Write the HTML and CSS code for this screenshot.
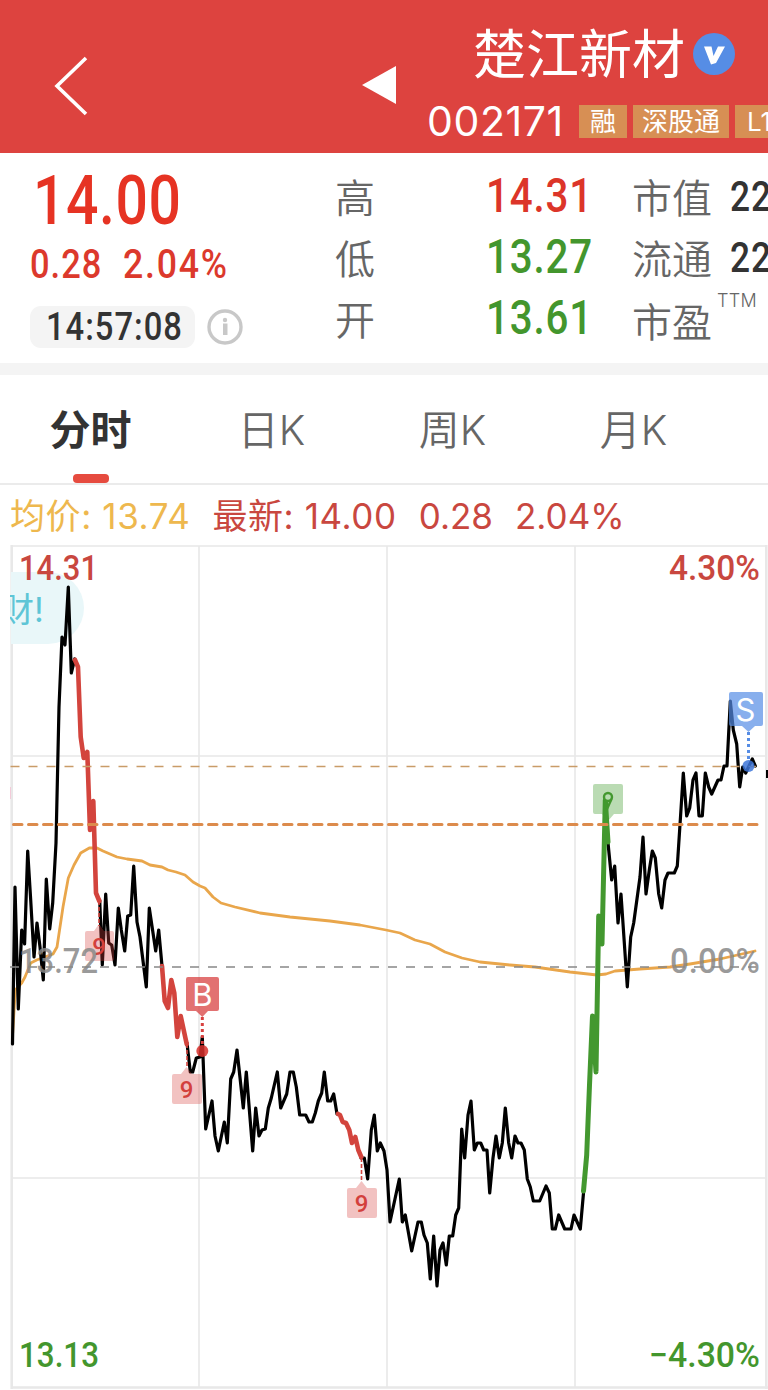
FILE: index.html
```html
<!DOCTYPE html>
<html lang="zh-CN">
<head>
    <meta charset="UTF-8">
    <meta name="viewport" content="width=device-width, initial-scale=1.0">
    <title>楚江新材 002171</title>
    <link rel="stylesheet" href="styles.css">
</head>
<body>
    <header class="top-bar">
        <svg class="back" width="36" height="64" viewBox="0 0 36 64"><path d="M33 4L4 32L33 60" fill="none" stroke="#fff" stroke-width="3.6"/></svg>
        <svg class="prev" width="35" height="38" viewBox="0 0 35 38"><path d="M0 19L34 0V38Z" fill="#fff"/></svg>
        <div class="stock">
            <div class="stock-name">
                <h1>楚江新材</h1>
                <svg width="42" height="42" viewBox="0 0 42 42"><circle cx="21" cy="21" r="21" fill="#568de5"/><path d="M11 13.5H18.500L20.5 23L25 13.5H32L23 30L18 31.5Z" fill="#fff"/></svg>
            </div>
            <div class="stock-code">
                <span class="code">002171</span>
                <span class="tag">融</span>
                <span class="tag">深股通</span>
                <span class="tag">L1</span>
            </div>
        </div>
    </header>

    <section class="quote">
        <div class="price-box">
            <div class="price"><span class="num">14.00</span></div>
            <div class="change"><span class="num">0.28</span><span class="num rate">2.04%</span></div>
            <div class="time-row">
                <div class="time"><span class="num">14:57:08</span></div>
                <svg width="36" height="36" viewBox="0 0 36 36"><circle cx="18" cy="18" r="16" fill="none" stroke="#c8c8c8" stroke-width="3.4"/><circle cx="18" cy="11" r="2.2" fill="#c8c8c8"/><path d="M16 14.500H20.500V26H16Z" fill="#c8c8c8"/></svg>
            </div>
        </div>
        <div class="labels"><span>高</span><span>低</span><span>开</span></div>
        <div class="values">
            <span class="num up">14.31</span>
            <span class="num down">13.27</span>
            <span class="num down">13.61</span>
        </div>
        <div class="labels"><span>市值</span><span>流通</span><span class="pe">市盈<sup>TTM</sup></span></div>
        <div class="caps"><span class="num">22</span><span class="num">22</span></div>
    </section>

    <nav class="tabs">
        <a class="tab active">分时</a>
        <a class="tab">日K</a>
        <a class="tab">周K</a>
        <a class="tab">月K</a>
    </nav>

    <div class="legend">
        <span class="avg">均价: 13.74</span>
        <span>最新: 14.00</span>
        <span class="diff">0.28</span>
        <span class="diff">2.04%</span>
    </div>

    <svg class="chart" width="768" height="845" viewBox="0 545 768 845">
        <!-- grid -->
        <path class="grid" d="M11 546H767M11 756H767M11 1178H767M199 546V1387M387 546V1387M575 546V1387"/>
        <path class="frame" d="M11.7 545V1389M766.3 545V1389M11 1387.5H768"/>

        <!-- danmaku bubble -->
        <path d="M11 572H48A36 36 0 0 1 48 644H11Z" fill="#e9f7f9"/>
        <svg x="10" y="580" width="60" height="60" viewBox="10 580 60 60"><text class="bubble" x="0" y="622">财!</text></svg>
        <path d="M10.500 787V799" stroke="#f3cbd9" stroke-width="1"/>

        <path class="avg-line" d="M12.700 1033L15.300 990L21.700 983L25 977L30.700 963L36.700 960L53 954L57 947L60 927L63 907L68.300 878L74 865L80.700 853L89.300 848L97 848L103 851L117 857L127 859L142 861L150 865L162 867L168 870L176 872L185 875L193 882L200 886L205 888L213 897L221 903L235 907L260 913L290 917L330 921L360 925L386 930L400 933L415 940L430 944L445 952L462 958L480 962L510 965L535 967L570 972L597 975L606 974L615 971L640 969L670 967L690 964L720 959L755 951"/>

        <path class="price-line" d="M12.500 1044L15 887L18.300 1009L21.700 930L24.600 944L27.700 851L30.700 900L34 957L37 923L40 947L43.300 980L46.300 879L49.700 929L52.700 903L56 843L59 707L62 637L65 645L68.300 587L71.300 673L74.700 659"/>
        <path class="price-line" d="M99.700 900L102.300 965L105.700 894L108.700 943L111.700 945L115 965L118.300 908L121.300 930L124.700 951L127.700 916L130.700 915L133.700 866L137 922L140 937L146.300 987L149.300 908L155.700 951L158.700 930L162 966"/>
        <path class="price-line" d="M187 1043L190.300 1072L192.700 1072L196.300 1058L200 1057L202.300 1037L205.700 1129L212 1101L215 1136L218.300 1151L224.300 1122L227.300 1143L230.700 1079L233.700 1072L237 1050L243.300 1108L246.300 1072L252.700 1151L255.700 1108L259 1136L262 1130L265.300 1129L268.300 1108L271.300 1098L277.300 1072L280.700 1108L286.700 1094L290 1072L293.300 1072L296.300 1087L299.700 1115L305.700 1115L309 1122L312.300 1122L315.300 1113L318.300 1101L321.700 1093L324.300 1072L327.700 1101L330.700 1101L333.700 1094L337 1114"/>
        <path class="price-line" d="M361 1158L364.300 1158L367.700 1179L371.300 1130L374.300 1115L377.300 1151L380.300 1143L384 1151L387 1170L390 1222L399.300 1179L402.300 1222L405.300 1215L411.700 1251L418 1222L421.300 1222L424 1235L427.300 1243L430.300 1279L433.700 1236L437 1286L440 1250L443 1243L446.300 1265L449.300 1236L452.700 1236L455.700 1215L458.700 1208L461.700 1129L464.700 1158L468 1115L471 1101L474.300 1150L477.300 1143L480.700 1143L483.700 1150L487 1150L489.700 1193L493 1158L496 1136L499.300 1158L502.300 1143L505.300 1108L508.700 1143L511.700 1158L515 1136L518 1143L521 1143L524.300 1150L527.300 1179L530.300 1187L533.300 1201L539.700 1201L546 1186L549.300 1193L552.300 1229L555.300 1229L558.700 1215L564.700 1229L571 1229L574 1215L580.300 1229L583.500 1193"/>
        <path class="price-line" d="M608 843L611.700 880L614.700 866L618 923L621 894L627.300 987L630.700 937L633.700 923L640 877L643 837L646 894L649.300 870L652.300 851L655.300 858L658.700 894L661.700 908L665 880L668 873L674.300 873L677.300 866L680.300 820L683.300 773L686.700 816L689.700 808L693 780L696 773L699 816L702.300 816L705.300 773L708.700 787L711.700 794L718 780L721 780L724 766L727 766L730.300 701L733.300 730L736.700 744L739.700 787L742.700 767L745.700 773L752.300 759L755.300 766"/>

        <!-- nine-turn runs -->
        <path class="run" d="M75 660L78 667L80.700 737L83.700 758L87.300 752L90 830L93.300 801L96 893L99.300 901"/>
        <path class="run" d="M162 966L164.700 1001L168 1008L171.300 980L174.300 993L177.300 1037L180.700 1016L186.700 1044"/>
        <path class="run" d="M338 1114L340 1115L342.700 1122L346 1123L349.300 1130L352 1143L355.300 1137L358.300 1150L361.300 1157"/>
        <path class="run run-up" d="M583.500 1191L586.700 1155L589.500 1085L592.500 1016L596 1072L598.700 916L602 944L605.300 800L608 842"/>

        <path class="dash-last" d="M10.500 766.500H756"/>
        <path class="dash-cost" d="M13.500 824.500H757"/>
        <path class="dash-zero" d="M10 967H756"/>

        <!-- markers -->
        <g class="mark-down">
            <path d="M99 901V926M187 1044V1067M361.500 1158V1181"/>
            <path class="flag" d="M87 931H94L99 924L104 931H112Q114 931 114 933V959Q114 961 112 961H87Q85 961 85 959V933Q85 931 87 931Z"/>
            <path class="flag" d="M174 1074H181L186.500 1067L192 1074H200Q202 1074 202 1076V1102Q202 1104 200 1104H174Q172 1104 172 1102V1076Q172 1074 174 1074Z"/>
            <path class="flag" d="M349 1188H356L361.500 1181L367 1188H375Q377 1188 377 1190V1216Q377 1218 375 1218H349Q347 1218 347 1216V1190Q347 1188 349 1188Z"/>
            <text x="99" y="955">9</text>
            <text x="186.500" y="1098">9</text>
            <text x="361.500" y="1212">9</text>
        </g>
        <path d="M595 784H621Q623 784 623 786V812Q623 814 621 814H614L608 821L602 814H595Q593 814 593 812V786Q593 784 595 784Z" fill="#419b2c" fill-opacity=".36"/>
        <circle cx="608" cy="797" r="4" fill="#b7dcb0" stroke="#43982f" stroke-width="2.400"/>
        <path d="M611.500 799L607 809" stroke="#43982f" stroke-width="2.400"/>

        <path d="M202.300 1017V1044" stroke="#d8403f" stroke-width="3" stroke-dasharray="3 3"/>
        <path d="M188 977H217Q219 977 219 979V1009Q219 1011 217 1011H208L202.300 1017L196 1011H188Q186 1011 186 1009V979Q186 977 188 977Z" fill="#d8403f" fill-opacity=".74"/>
        <circle cx="202.300" cy="1051" r="6" fill="#d8302c" fill-opacity=".85"/>
        <text class="mark-text" x="202.300" y="1005.500">B</text>

        <path d="M748.500 732V760" stroke="#568de5" stroke-width="3" stroke-dasharray="3 3"/>
        <path d="M731 692H761Q763 692 763 694V724Q763 726 761 726H755L748.500 732L742 726H731Q729 726 729 724V694Q729 692 731 692Z" fill="#568de5" fill-opacity=".7"/>
        <circle cx="748.500" cy="766" r="6" fill="#3d75d8" fill-opacity=".85"/>
        <text class="mark-text" x="745.500" y="720.500">S</text>
        <path d="M766 770H768V778H766Z"/>

        <!-- axis values -->
        <g class="axis">
            <text class="hi" x="19" y="580" textLength="79" lengthAdjust="spacingAndGlyphs">14.31</text>
            <text class="hi" x="669" y="580" textLength="91" lengthAdjust="spacingAndGlyphs">4.30%</text>
            <text class="mid" x="19" y="973" textLength="79" lengthAdjust="spacingAndGlyphs">13.72</text>
            <text class="mid" x="670" y="973" textLength="90" lengthAdjust="spacingAndGlyphs">0.00%</text>
            <text class="lo" x="19" y="1367" textLength="80" lengthAdjust="spacingAndGlyphs">13.13</text>
            <text class="lo" x="649" y="1367" textLength="111" lengthAdjust="spacingAndGlyphs">−4.30%</text>
        </g>
    </svg>
</body>
</html>
```
FILE: styles.css
```css
body {
    margin: 0;
    width: 768px;
    height: 1390px;
    overflow: hidden;
    background: #fff;
    color: #333;
    font-family: Inter, "Noto Sans CJK SC", sans-serif;
}
.top-bar {
    display: flex;
    height: 153px;
    overflow: hidden;
    background: #dd433f;
    color: #fff;
}
.back {
    margin: 54px 0 0 53px;
    flex: none;
}
.prev {
    margin: 66px 0 0 273px;
    flex: none;
}
.stock {
    margin-left: 30px;
    flex: none;
    width: 341px;
}
.stock-name {
    display: flex;
    align-items: center;
    height: 100px;
    padding: 8px 0 0 46px;
    box-sizing: border-box;
    gap: 8px;
}
.stock-name h1 {
    margin: 2px 0 0;
    font-size: 53px;
    line-height: 80px;
    font-weight: 400;
}
.stock-code {
    display: flex;
    align-items: center;
    height: 43px;
    gap: 6px;
}
.code {
    flex: none;
    width: 146px;
    font-size: 41px;
    line-height: 41px;
    letter-spacing: 0.6px;
    white-space: nowrap;
}
.tag {
    flex: none;
    min-width: 48px;
    height: 33px;
    padding: 0 9px;
    box-sizing: border-box;
    background: #d78f54;
    font-size: 26px;
    line-height: 33px;
    text-align: center;
    white-space: nowrap;
}
.num {
    display: inline-block;
    font-family: Roboto, sans-serif;
    font-weight: 500;
    letter-spacing: 0.03em;
    transform: scaleX(0.84);
    transform-origin: left;
}
.quote {
    display: grid;
    grid-template-columns: 305px 151px 146px 98px 38px;
    height: 210px;
    padding-left: 30px;
    box-sizing: border-box;
    overflow: hidden;
    white-space: nowrap;
}
.price {
    height: 80px;
    padding-top: 6px;
    box-sizing: border-box;
    color: #e63323;
    font-size: 68px;
    line-height: 80px;
}
.price .num {
    margin-left: 3px;
    letter-spacing: 0.01em;
}
.change {
    display: flex;
    height: 61px;
    color: #dc392c;
    font-size: 41px;
    line-height: 63px;
}
.change .num {
    width: 93px;
}
.change .rate {
    letter-spacing: 0.05em;
    transform: scaleX(0.87);
}
.time-row {
    display: flex;
    align-items: center;
    gap: 12px;
    height: 66px;
}
.time {
    width: 165px;
    height: 42px;
    padding-left: 16px;
    box-sizing: border-box;
    border-radius: 11px;
    background: #f4f4f4;
    font-size: 39px;
    line-height: 39px;
}
.labels, .values, .caps {
    display: flex;
    flex-direction: column;
    padding-top: 12px;
}
.labels span, .values span, .caps span {
    height: 61px;
    line-height: 61px;
}
.labels {
    padding-top: 15px;
    color: #666;
    font-size: 40px;
    font-weight: 350;
}
.labels .pe {
    padding-top: 2px;
}
.labels sup {
    display: inline-block;
    margin-left: 5px;
    font-size: 18px;
    line-height: 18px;
    letter-spacing: 0.3px;
    vertical-align: 30px;
}
.values {
    font-size: 48px;
}
.values .num {
    letter-spacing: 0.02em;
}
.caps {
    padding-top: 13px;
    font-size: 42px;
}
.up {
    color: #dc3529;
}
.down {
    color: #43962d;
}
.tabs {
    display: flex;
    height: 122px;
    box-sizing: border-box;
    border-top: 12px solid #f4f4f4;
    border-bottom: 2px solid #ebebeb;
}
.tab {
    display: flex;
    flex-direction: column;
    align-items: center;
    width: 181px;
    color: #666;
    font-size: 41px;
    font-weight: 350;
    line-height: 110px;
}
.active {
    color: #333;
    font-weight: 700;
}
.active::after {
    content: "";
    width: 36px;
    height: 9px;
    margin-top: -11px;
    border-radius: 4px;
    background: #e64b3f;
}
.legend {
    display: flex;
    gap: 22px;
    height: 60px;
    padding-left: 10px;
    color: #c9473f;
    font-size: 35px;
    line-height: 62px;
    letter-spacing: 0.6px;
    white-space: nowrap;
}
.avg {
    color: #eeb84e;
}
.diff {
    letter-spacing: 0;
}
.chart {
    display: block;
}
.grid, .frame {
    fill: none;
    stroke: #e8e8e8;
    stroke-width: 1.6;
}
.frame {
    stroke-width: 2.6;
}
.price-line, .avg-line, .run {
    fill: none;
    stroke: #000;
    stroke-width: 3.2;
    stroke-linejoin: round;
    stroke-linecap: round;
}
.avg-line {
    stroke: #e9a64b;
    stroke-width: 2.8;
}
.run {
    stroke: #d3443d;
    stroke-width: 4.6;
}
.run-up {
    stroke: #43982f;
    stroke-width: 5;
}
.dash-last {
    stroke: #c99c68;
    stroke-width: 1.4;
    stroke-dasharray: 9 9;
}
.dash-cost {
    stroke: #dc8b4c;
    stroke-width: 3;
    stroke-linecap: round;
    stroke-dasharray: 8.5 6.5;
}
.dash-zero {
    stroke: #888;
    stroke-width: 1.6;
    stroke-dasharray: 9 9;
}
.mark-down path {
    fill: none;
    stroke: #d3443d;
    stroke-width: 1.6;
    stroke-dasharray: 4 2;
}
.mark-down .flag {
    fill: #d8403f;
    fill-opacity: 0.32;
    stroke: none;
}
.mark-down text {
    fill: #d3403c;
    font: 500 24px Roboto, sans-serif;
    text-anchor: middle;
}
.mark-text {
    fill: #fff;
    font-size: 31px;
    text-anchor: middle;
}
.bubble {
    fill: #5ec5d6;
    font-size: 34px;
}
.axis text {
    font: 500 35px Roboto, sans-serif;
}
.axis .hi {
    fill: #c9473f;
}
.axis .mid {
    fill: #888;
    fill-opacity: 0.85;
}
.axis .lo {
    fill: #43962d;
}
```
